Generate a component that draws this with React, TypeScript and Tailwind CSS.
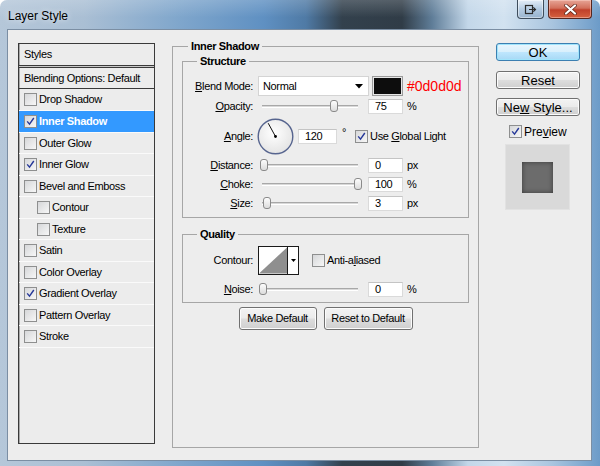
import React from "react";

function Check({ on }: { on?: boolean }) {
  return (
    <span className="w-[13px] h-[13px] shrink-0 border border-[#8e8f8f] bg-[linear-gradient(135deg,#d6d7d9,#f7f7f7)] flex items-center justify-center">
      {on && (
        <svg width="9" height="9" viewBox="0 0 9 9">
          <path d="M1.2 4.4 L3.5 7.2 L7.8 1" fill="none" stroke="#27399a" strokeWidth="1.4" />
        </svg>
      )}
    </span>
  );
}

function Slider({ pos }: { pos: number }) {
  return (
    <div className="relative w-[104px] h-[14px] flex items-center px-[4px]">
      <div className="w-full h-[3px] border-t border-[#a8a8a8] border-b border-b-white bg-[#d8d8d8]" />
      <div
        className="absolute top-[1px] w-[8px] h-[12px] rounded-[3px] border border-[#8a8a8a] bg-[linear-gradient(180deg,#fdfdfd,#dcdcdc)]"
        style={{ left: pos }}
      />
    </div>
  );
}

function Num({ v, w = "w-[35px]" }: { v: string; w?: string }) {
  return (
    <div className={`${w} h-[15px] bg-white border border-[#dadada] border-t-[#c4c4c4] flex items-center pl-[6px] leading-none`}>
      {v}
    </div>
  );
}

function Label({ children }: { children: React.ReactNode }) {
  return <div className="w-[70px] shrink-0 text-right">{children}</div>;
}

function Btn({ children, w }: { children: React.ReactNode; w: string }) {
  return (
    <div
      className={`${w} h-[23px] rounded-[3px] border border-[#707070] bg-[linear-gradient(180deg,#f3f3f3_0%,#ebebeb_48%,#dddddd_52%,#cfcfcf_100%)] shadow-[inset_0_0_0_1px_#fcfcfc] flex items-center justify-center`}
    >
      {children}
    </div>
  );
}

const items: { t: string; on?: boolean; sel?: boolean; ind?: boolean }[] = [
  { t: "Drop Shadow" },
  { t: "Inner Shadow", on: true, sel: true },
  { t: "Outer Glow" },
  { t: "Inner Glow", on: true },
  { t: "Bevel and Emboss" },
  { t: "Contour", ind: true },
  { t: "Texture", ind: true },
  { t: "Satin" },
  { t: "Color Overlay" },
  { t: "Gradient Overlay", on: true },
  { t: "Pattern Overlay" },
  { t: "Stroke" },
];
const heights = [22, 22, 21, 22, 21, 22, 21, 22, 21, 22, 21, 22];

export default function App() {
  return (
    <div className="w-[600px] h-[466px] flex flex-col rounded-t-[7px] overflow-hidden font-['Liberation_Sans',Arial,sans-serif] text-[11px] tracking-[-0.35px] text-black bg-[linear-gradient(90deg,#b5c7d9_0%,#aabfd4_14%,#7fa6cc_30%,#5f90c2_44%,#4f7aa5_51%,#33414d_57%,#303c47_67%,#5f7d98_72%,#c3d7e9_78%,#d2e2f0_84%,#a9c5df_92%,#6c9bc8_100%)]">
      {/* title bar */}
      <div className="h-[29px] shrink-0 flex items-start bg-[linear-gradient(180deg,rgba(255,255,255,0.18),rgba(255,255,255,0)_60%)]">
        <div className="pl-[8px] pt-[9px] text-[12px] tracking-normal leading-[14px] text-black [text-shadow:0_0_6px_rgba(255,255,255,0.9)]">
          Layer Style
        </div>
        <div className="ml-auto mr-[8px] flex gap-[4px]">
          <div className="w-[27px] h-[19px] rounded-b-[4px] border border-t-0 border-[#3e4d5c] bg-[linear-gradient(180deg,rgba(235,242,250,0.8),rgba(170,195,220,0.6)_50%,rgba(130,160,190,0.6))] shadow-[inset_0_0_0_1px_rgba(255,255,255,0.45)] flex items-center justify-center">
            <svg width="13" height="11" viewBox="0 0 13 11">
              <rect x="1.5" y="1.5" width="7" height="8" fill="none" stroke="#2b2b2b" strokeWidth="1.2" />
              <path d="M5 5.5 H11.5 M9.3 3.3 L11.5 5.5 L9.3 7.7" fill="none" stroke="#2b2b2b" strokeWidth="1.2" />
            </svg>
          </div>
          <div className="w-[44px] h-[19px] rounded-b-[4px] border border-t-0 border-[#56261f] bg-[linear-gradient(180deg,#e7a596_0%,#d2705c_45%,#c0402a_55%,#d5613f_100%)] shadow-[inset_0_0_0_1px_rgba(255,220,210,0.45)] flex items-center justify-center">
            <svg width="13" height="11" viewBox="0 0 13 11">
              <path d="M2 1.5 L11 9.5 M11 1.5 L2 9.5" stroke="#5a2418" strokeWidth="3.6" strokeLinecap="round" />
              <path d="M2 1.5 L11 9.5 M11 1.5 L2 9.5" stroke="#ffffff" strokeWidth="2.2" strokeLinecap="round" />
            </svg>
          </div>
        </div>
      </div>

      {/* client area */}
      <div className="flex-1 ml-[7px] mr-[8px] mb-[5px] border border-[#7b8ea3] bg-[#ededed] flex items-start">
        {/* left list */}
        <div className="ml-[10px] mt-[13px] w-[137px] h-[401px] border border-[#3a3a3a] shadow-[inset_1px_0_0_#a8a8a8] bg-[#ececec] flex flex-col">
          <div className="h-[22px] shrink-0 flex items-center pl-[5px] border-b border-[#3a3a3a]">Styles</div>
          <div className="h-[1px] shrink-0 bg-[#c8c8c8]" />
          <div className="h-[22px] shrink-0 flex items-center pl-[5px] border-t border-b border-[#3a3a3a]">
            Blending Options: Default
          </div>
          {items.map((it, i) => (
            <div
              key={it.t}
              className={`${heights[i] === 22 ? "h-[22px]" : "h-[21px]"} shrink-0 flex items-center gap-[1px] border-b border-[#fafafa] ${
                it.ind ? "pl-[18px]" : "pl-[5px]"
              } ${it.sel ? "bg-[#3399ff] text-white font-bold" : ""}`}
            >
              <Check on={it.on} />
              <span className="ml-[1px]">{it.t}</span>
            </div>
          ))}
        </div>

        {/* middle */}
        <fieldset className="ml-[17px] mt-[9px] w-[307px] h-[409px] border border-[#a6a6a6] px-[9px]">
          <legend className="ml-[6px] px-[3px] font-bold leading-[14px]">Inner Shadow</legend>

          <fieldset className="mt-[1px] border border-[#a6a6a6] pt-[8px] pb-[7px]">
            <legend className="ml-[14px] px-[3px] font-bold leading-[14px]">Structure</legend>

            <div className="h-[20px] flex items-center">
              <Label>
                <u>B</u>lend Mode:
              </Label>
              <div className="ml-[5px] w-[111px] h-[20px] bg-white border border-[#d4d4d4] flex items-center pl-[4px] pr-[5px]">
                <span>Normal</span>
                <svg className="ml-auto" width="8" height="5" viewBox="0 0 8 5">
                  <path d="M0 0 H8 L4 4.5 Z" fill="#000" />
                </svg>
              </div>
              <div className="ml-[3px] w-[31px] h-[20px] border border-[#9b9b9b] p-[1px] bg-[#e6e6e6]">
                <div className="w-full h-full bg-[#0d0d0d]" />
              </div>
              <span className="ml-[4px] text-[14px] tracking-normal leading-none text-[#ff0000]">#0d0d0d</span>
            </div>

            <div className="mt-[3px] h-[14px] flex items-center">
              <Label>
                <u>O</u>pacity:
              </Label>
              <div className="ml-[5px]">
                <Slider pos={72} />
              </div>
              <div className="ml-[6px]">
                <Num v="75" />
              </div>
              <span className="ml-[4px]">%</span>
            </div>

            <div className="mt-[5px] h-[36px] flex items-center">
              <Label>
                <u>A</u>ngle:
              </Label>
              <svg className="ml-[4px]" width="37" height="37" viewBox="0 0 37 37">
                <defs>
                  <radialGradient id="dg" cx="0.45" cy="0.4" r="0.6">
                    <stop offset="0" stopColor="#ffffff" />
                    <stop offset="1" stopColor="#e4e4e4" />
                  </radialGradient>
                </defs>
                <circle cx="18.5" cy="18.5" r="17.3" fill="url(#dg)" stroke="#57658f" strokeWidth="1.4" />
                <line x1="18.5" y1="18.5" x2="11.2" y2="5.2" stroke="#111" strokeWidth="1" />
                <circle cx="18.5" cy="18.5" r="1.4" fill="#000" />
              </svg>
              <div className="ml-[4px]">
                <Num v="120" w="w-[39px]" />
              </div>
              <span className="ml-[5px] self-start mt-[9px] leading-none">°</span>
              <div className="ml-[9px] flex items-center">
                <Check on />
                <span className="ml-[2px]">
                  Use <u>G</u>lobal Light
                </span>
              </div>
            </div>

            <div className="mt-[4px] h-[14px] flex items-center">
              <Label>
                <u>D</u>istance:
              </Label>
              <div className="ml-[5px]">
                <Slider pos={2} />
              </div>
              <div className="ml-[6px]">
                <Num v="0" />
              </div>
              <span className="ml-[4px]">px</span>
            </div>

            <div className="mt-[5px] h-[14px] flex items-center">
              <Label>
                <u>C</u>hoke:
              </Label>
              <div className="ml-[5px]">
                <Slider pos={96} />
              </div>
              <div className="ml-[6px]">
                <Num v="100" />
              </div>
              <span className="ml-[4px]">%</span>
            </div>

            <div className="mt-[5px] h-[14px] flex items-center">
              <Label>
                <u>S</u>ize:
              </Label>
              <div className="ml-[5px]">
                <Slider pos={5} />
              </div>
              <div className="ml-[6px]">
                <Num v="3" />
              </div>
              <span className="ml-[4px]">px</span>
            </div>
          </fieldset>

          <fieldset className="mt-[9px] border border-[#a6a6a6] pt-[5px] pb-[6px]">
            <legend className="ml-[14px] px-[3px] font-bold leading-[14px]">Quality</legend>

            <div className="h-[29px] flex items-center">
              <Label>Contour:</Label>
              <div className="ml-[5px] w-[41px] h-[29px] border border-[#1a1a1a] bg-white flex">
                <svg width="29" height="27" viewBox="0 0 29 27" className="border-r border-[#1a1a1a]">
                  <polygon points="0,27 29,0 29,27" fill="#8f8f8f" />
                </svg>
                <div className="flex-1 flex items-center justify-center">
                  <svg width="5" height="3" viewBox="0 0 5 3">
                    <path d="M0 0 H5 L2.5 3 Z" fill="#000" />
                  </svg>
                </div>
              </div>
              <div className="ml-[13px] flex items-center">
                <Check />
                <span className="ml-[2px]">
                  Anti-a<u>l</u>iased
                </span>
              </div>
            </div>

            <div className="mt-[7px] h-[14px] flex items-center">
              <Label>
                <u>N</u>oise:
              </Label>
              <div className="ml-[5px]">
                <Slider pos={1} />
              </div>
              <div className="ml-[6px]">
                <Num v="0" />
              </div>
              <span className="ml-[4px]">%</span>
            </div>
          </fieldset>

          <div className="mt-[4px] flex justify-center gap-[7px]">
            <Btn w="w-[78px]">Make Default</Btn>
            <Btn w="w-[89px]">Reset to Default</Btn>
          </div>
        </fieldset>

        {/* right column */}
        <div className="ml-[17px] mt-[13px] w-[84px] flex flex-col text-[13px] tracking-normal">
          <div className="h-[18px] rounded-[3px] border border-[#3c7fb1] bg-[linear-gradient(180deg,#eaf6fd_0%,#d9f0fc_48%,#bee6fd_52%,#a7d9f5_100%)] shadow-[inset_0_0_0_1px_#a0e4fb] flex items-center justify-center leading-none">
            OK
          </div>
          <div className="mt-[10px] h-[18px] rounded-[3px] border border-[#707070] bg-[linear-gradient(180deg,#f3f3f3_0%,#ebebeb_48%,#dddddd_52%,#cfcfcf_100%)] shadow-[inset_0_0_0_1px_#fcfcfc] flex items-center justify-center leading-none">
            Reset
          </div>
          <div className="mt-[9px] h-[18px] rounded-[3px] border border-[#707070] bg-[linear-gradient(180deg,#f3f3f3_0%,#ebebeb_48%,#dddddd_52%,#cfcfcf_100%)] shadow-[inset_0_0_0_1px_#fcfcfc] flex items-center justify-center leading-none">
            <span>
              Ne<u>w</u> Style...
            </span>
          </div>
          <div className="mt-[9px] h-[13px] flex items-center ml-[13px] text-[12px]">
            <Check on />
            <span className="ml-[2px]">
              Pre<u>v</u>iew
            </span>
          </div>
          <div className="mt-[6px] ml-[9px] w-[65px] h-[66px] bg-[#d9d9d9] border border-[#e2e2e2] flex items-center justify-center">
            <div className="w-[31px] h-[31px] bg-[#6c6c6c] shadow-[inset_0_0_5px_#3a3a3a]" />
          </div>
        </div>
      </div>
    </div>
  );
}
